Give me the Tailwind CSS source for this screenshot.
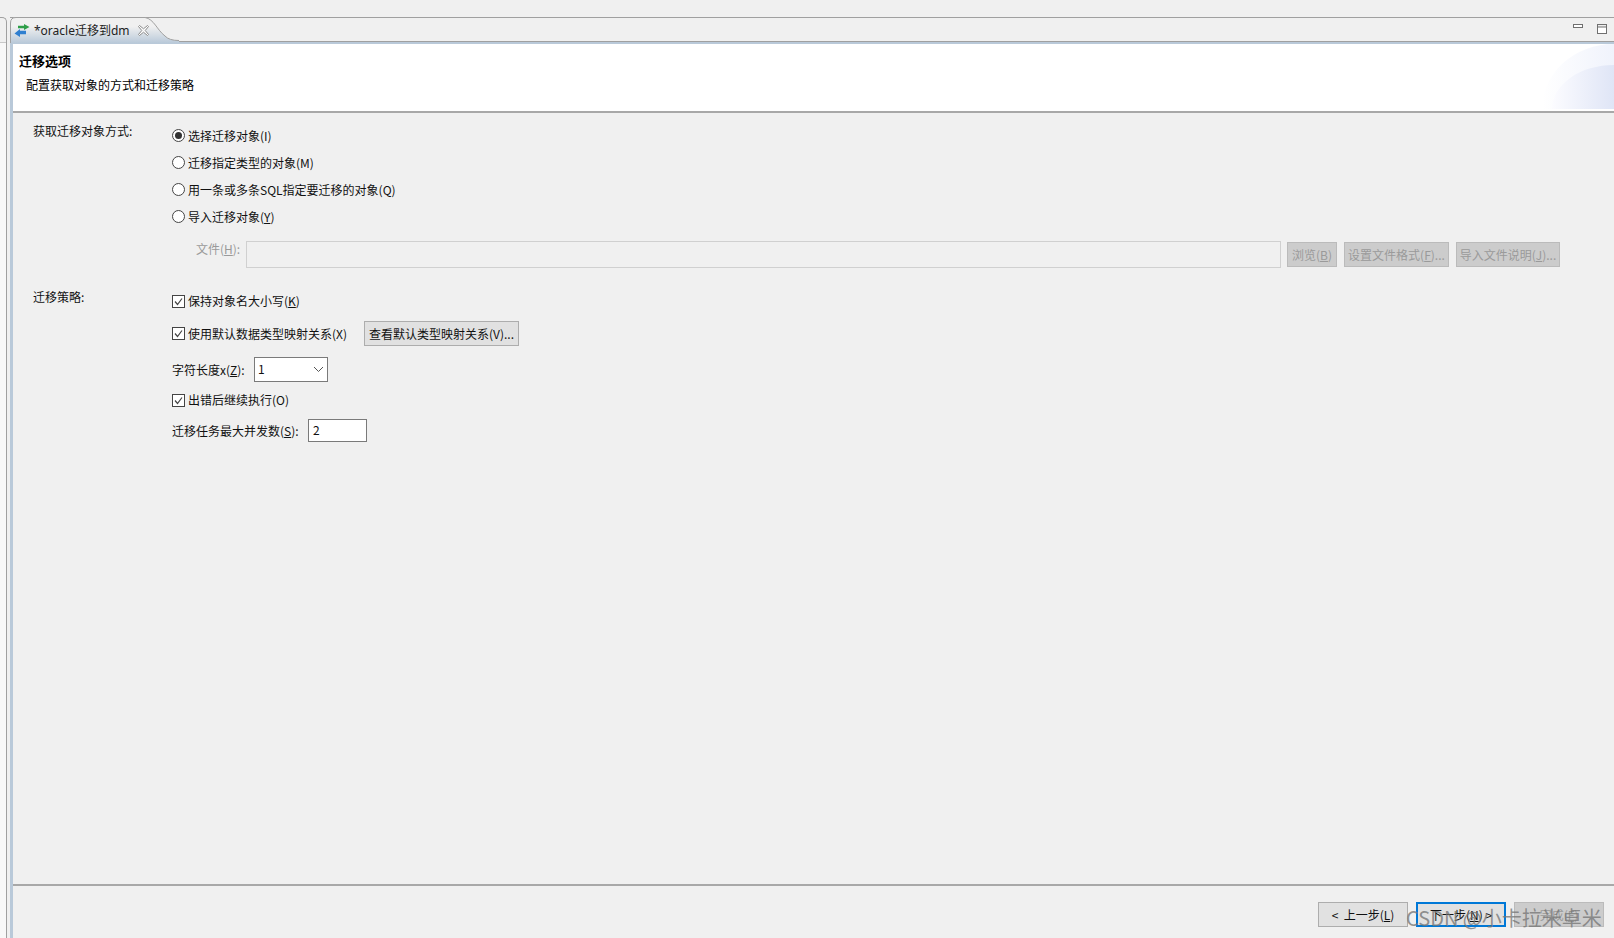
<!DOCTYPE html>
<html lang="zh">
<head>
  <meta charset="UTF-8" />
  <title>oracle迁移到dm</title>
  <script src="https://cdn.jsdelivr.net/npm/@tailwindcss/browser@4"></script>
</head>
<body class="bg-[#f0f0f0] overflow-hidden font-['Noto_Sans_CJK_SC','Noto_Sans',sans-serif] text-[12px] text-[#111]">
<div class="relative flex h-[938px] w-[1614px]">

  <!-- left neighbour stack edge -->
  <div class="w-[7px] shrink-0 pt-[17px]">
    <div class="h-full border-t border-r border-[#a0a0a0] rounded-tr-[5px] flex flex-col">
      <div class="h-[25px] shrink-0 border-b border-[#c8c8c8]"></div>
      <div class="flex-1 bg-[#f8f8f8]"></div>
    </div>
  </div>
  <div class="w-[3px] shrink-0"></div>

  <div class="flex-1 flex flex-col min-w-0">
    <!-- tab strip -->
    <div class="h-[17px] shrink-0"></div>
    <div class="relative h-[24px] shrink-0 border-t border-[#a0a0a0] flex items-center justify-end gap-[13px] pr-[6px]">
      <svg class="absolute left-0 -top-px z-10" width="170" height="26" viewBox="0 0 170 26">
        <defs>
          <linearGradient id="tabFill" x1="0" y1="0" x2="0" y2="1">
            <stop offset="0.35" stop-color="#f0f0f0"/>
            <stop offset="1" stop-color="#b9c9d9"/>
          </linearGradient>
        </defs>
        <path d="M0 26V6Q0.500 0.500 6 0.500H135C144 2 147 13 155 19Q159 23.500 169 23.500V26Z" fill="url(#tabFill)"/>
        <path d="M0.500 26V6Q0.500 0.500 6 0.500H135C144 2 147 13 155 19Q159 23.500 169 23.500" fill="none" stroke="#a0a0a0"/>
      </svg>
      <div class="absolute left-[4px] top-0 h-[24px] flex items-center gap-[4px] z-20">
        <svg width="16" height="13" viewBox="0 0 16 13">
          <path d="M4 1.800H10V0L15.500 3L10 6V4.200H4Z" fill="#2e9e48"/>
          <path d="M12 6.800H6V5L0.500 9.500L6 13V10.200H12Z" fill="#2f7fd0"/>
        </svg>
        <span class="text-[12px] leading-none text-[#222] font-['Noto_Sans',sans-serif] whitespace-nowrap">*oracle<span class="font-['Noto_Sans_CJK_SC']">迁移到</span>dm</span>
        <svg class="ml-[3px]" width="13" height="13" viewBox="0 0 13 13" fill="none">
          <path d="M2.500 1.500L6.500 4.800L10.500 1.500L11.500 2.500L8.200 6.500L11.500 10.500L10.500 11.500L6.500 8.200L2.500 11.500L1.500 10.500L4.800 6.500L1.500 2.500Z" fill="#fff" stroke="#8a8a8a"/>
        </svg>
      </div>
      <svg class="mb-[6px]" width="11" height="5" viewBox="0 0 11 5"><rect x="0.500" y="0.500" width="9" height="3" fill="#fff" stroke="#707070"/></svg>
      <svg class="-mt-[1px]" width="11" height="11" viewBox="0 0 11 11"><rect x="0.500" y="0.500" width="9" height="9" fill="#fff" stroke="#707070"/><rect x="0.500" y="0.500" width="9" height="2.500" fill="#eee" stroke="#707070"/></svg>
    </div>

    <!-- editor frame -->
    <div class="flex-1 flex flex-col border-l-[3px] border-[#b9c9d9] min-h-0">
      <div class="h-[3px] shrink-0 -ml-[3px] bg-[#b9c9d9] border-t border-[#a0a0a0]"></div>

      <!-- wizard header -->
      <div class="relative h-[69px] shrink-0 bg-white border-b-2 border-[#a8a8a8] pl-[6px] overflow-hidden">
        <div class="absolute right-0 bottom-[2px] w-[72px] h-[65px] rounded-tl-[100%] bg-gradient-to-r from-white to-[#f0f3fc]"></div>
        <div class="absolute right-0 bottom-[2px] w-[62px] h-[44px] rounded-tl-[100%] bg-gradient-to-r from-[#fcfcff] to-[#dfe5f6]"></div>
        <p class="relative mt-[8px] text-[13px] leading-[18px] font-bold text-black">迁移选项</p>
        <p class="relative mt-[6px] ml-[7px] leading-[18px] text-black">配置获取对象的方式和迁移策略</p>
      </div>

      <!-- form -->
      <div class="flex-1 min-h-0 pl-[20px] pt-[9px]">
        <div class="flex">
          <div class="w-[139px] shrink-0 leading-[18px]">获取迁移对象方式:</div>
          <div class="flex-1 pr-[54px]">
            <div class="h-[27px] flex items-center gap-[3px]">
              <span class="w-[13px] h-[13px] rounded-full border border-[#444] bg-white flex items-center justify-center"><span class="w-[7px] h-[7px] rounded-full bg-[#333]"></span></span>
              <span>选择迁移对象(I)</span>
            </div>
            <div class="h-[27px] flex items-center gap-[3px]">
              <span class="w-[13px] h-[13px] rounded-full border border-[#444] bg-white"></span>
              <span>迁移指定类型的对象(M)</span>
            </div>
            <div class="h-[27px] flex items-center gap-[3px]">
              <span class="w-[13px] h-[13px] rounded-full border border-[#444] bg-white"></span>
              <span>用一条或多条SQL指定要迁移的对象(Q)</span>
            </div>
            <div class="h-[27px] flex items-center gap-[3px]">
              <span class="w-[13px] h-[13px] rounded-full border border-[#444] bg-white"></span>
              <span>导入迁移对象(<u>Y</u>)</span>
            </div>
            <div class="flex items-center mt-[11px] pl-[24px] text-[#9a9a9a]">
              <span class="w-[50px] -mt-[11px]">文件(<u>H</u>):</span>
              <div class="flex-1 h-[27px] border border-[#d0d0d0] bg-[#f0f0f0]"></div>
              <button class="ml-[6px] w-[50px] h-[25px] border border-[#bbb] bg-[#cccccc]">浏览(<u>B</u>)</button>
              <button class="ml-[7px] w-[105px] h-[25px] border border-[#bbb] bg-[#cccccc]">设置文件格式(<u>F</u>)...</button>
              <button class="ml-[7px] w-[104px] h-[25px] border border-[#bbb] bg-[#cccccc]">导入文件说明(<u>J</u>)...</button>
            </div>
          </div>
        </div>

        <div class="flex mt-[20px]">
          <div class="w-[139px] shrink-0 leading-[18px]">迁移策略:</div>
          <div class="flex-1">
            <div class="h-[24px] flex items-center gap-[3px] mt-[1px]">
              <svg width="13" height="13" viewBox="0 0 13 13"><rect x="0.500" y="0.500" width="12" height="12" fill="#fff" stroke="#444"/><path d="M3 6.500L5.500 9.500L10 3.500" fill="none" stroke="#444" stroke-width="1.200"/></svg>
              <span>保持对象名大小写(<u>K</u>)</span>
            </div>
            <div class="flex items-center mt-[8px] h-[25px]">
              <svg class="mr-[3px]" width="13" height="13" viewBox="0 0 13 13"><rect x="0.500" y="0.500" width="12" height="12" fill="#fff" stroke="#444"/><path d="M3 6.500L5.500 9.500L10 3.500" fill="none" stroke="#444" stroke-width="1.200"/></svg>
              <span class="w-[176px]">使用默认数据类型映射关系(X)</span>
              <button class="w-[155px] h-[25px] border border-[#adadad] bg-[#e1e1e1]">查看默认类型映射关系(V)...</button>
            </div>
            <div class="flex items-center mt-[11px] h-[25px]">
              <span class="w-[82px]">字符长度x(<u>Z</u>):</span>
              <div class="w-[74px] h-[25px] border border-[#7a7a7a] bg-white flex items-center justify-between pl-[3px] pr-[3px]">
                <span class="-mt-[2px]">1</span>
                <svg width="11" height="7" viewBox="0 0 11 7"><path d="M1 1L5.500 5.500L10 1" fill="none" stroke="#555"/></svg>
              </div>
            </div>
            <div class="h-[24px] flex items-center gap-[3px] mt-[6px]">
              <svg width="13" height="13" viewBox="0 0 13 13"><rect x="0.500" y="0.500" width="12" height="12" fill="#fff" stroke="#444"/><path d="M3 6.500L5.500 9.500L10 3.500" fill="none" stroke="#444" stroke-width="1.200"/></svg>
              <span>出错后继续执行(O)</span>
            </div>
            <div class="flex items-center mt-[7px] h-[23px]">
              <span class="w-[136px]">迁移任务最大并发数(<u>S</u>):</span>
              <div class="w-[59px] h-[23px] border border-[#7a7a7a] bg-white pl-[4px] leading-[20px]">2</div>
            </div>
          </div>
        </div>
      </div>

      <!-- footer buttons -->
      <div class="h-[54px] shrink-0 border-t-2 border-[#a8a8a8] flex justify-end items-start pt-[16px] pr-[10px] gap-[8px]">
        <button class="w-[90px] h-[25px] border border-[#adadad] bg-[#e1e1e1]">&lt;&nbsp; 上一步(<u>L</u>)</button>
        <button class="w-[90px] h-[25px] border-2 border-[#0078d7] bg-[#e1e1e1]">下一步(<u>N</u>) &gt;</button>
        <button class="w-[90px] h-[25px] border border-[#bbb] bg-[#cccccc] text-[#9a9a9a]">完成(<u>F</u>)</button>
      </div>
    </div>
  </div>

  <!-- CSDN watermark -->
  <span class="absolute left-[1406px] top-[904px] text-[20px] leading-[28px] text-[#777]/80 whitespace-nowrap">CSDN @小卡拉米卓米</span>
</div>
</body>
</html>
